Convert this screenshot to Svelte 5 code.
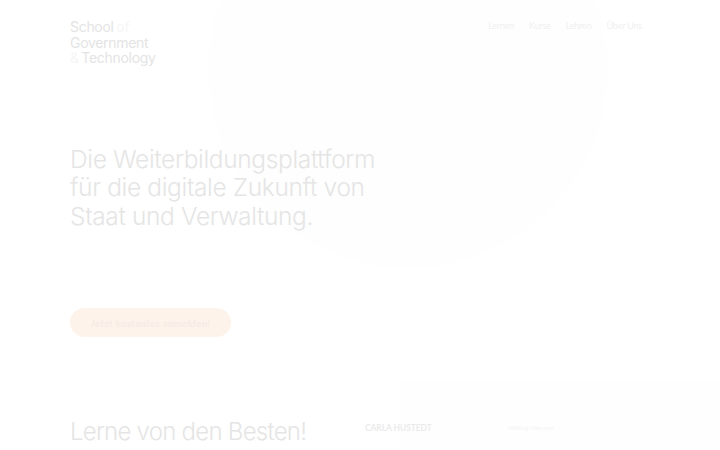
<script>
  const nav = ['Lernen', 'Kurse', 'Lehren', 'Über Uns'];
</script>

<div class="page">
  <div class="blob" aria-hidden="true"></div>
  <div class="panel" aria-hidden="true"></div>
  <header>
    <div class="logo">
      <div>School <span class="faint">of</span></div>
      <div>Government</div>
      <div><span class="faint">&amp;</span> Technology</div>
    </div>
    <nav>
      {#each nav as item}
        <span>{item}</span>
      {/each}
    </nav>
  </header>
  <main>
    <h1>Die Weiterbildungsplattform<br />für die digitale Zukunft von<br />Staat und Verwaltung.</h1>
    <button>Jetzt kostenlos anmelden!</button>
    <section>
      <h2>Lerne von den Besten!</h2>
      <div class="name">CARLA HUSTEDT</div>
      <div class="role">Stiftung Mercator</div>
    </section>
  </main>
</div>

<style>
  :global(body) {
    margin: 0;
    background: #fff;
  }
  .page {
    position: relative;
    width: 720px;
    height: 450px;
    overflow: hidden;
    background: #fff;
    font-family: "Lato", "Open Sans", sans-serif;
  }
  .blob {
    position: absolute;
    left: 208px;
    top: -132px;
    width: 400px;
    height: 400px;
    border-radius: 50%;
    background: #fefefe;
  }
  .panel {
    position: absolute;
    left: 400px;
    top: 380px;
    width: 320px;
    height: 70px;
    background: #fefefe;
  }
  header {
    position: relative;
    display: flex;
    justify-content: space-between;
    align-items: flex-start;
    padding: 19px 78px 0 70px;
  }
  .logo {
    font-family: "Inter", sans-serif;
    font-size: 14px;
    line-height: 15.5px;
    letter-spacing: -0.3px;
    word-spacing: -1px;
    color: #e4e4e4;
  }
  .faint {
    color: #f6f6f6;
  }
  nav {
    display: flex;
    gap: 15px;
    padding-top: 1px;
    font-size: 9px;
    line-height: 12px;
    letter-spacing: -0.2px;
    color: #f0f0f0;
  }
  main {
    position: relative;
    padding: 0 0 0 70px;
  }
  h1 {
    margin: 79px 0 0;
    font-family: "Inter", sans-serif;
    font-weight: 300;
    font-size: 24.5px;
    line-height: 28.5px;
    letter-spacing: -0.35px;
    color: #e5e5e5;
    white-space: nowrap;
  }
  button {
    display: block;
    margin-top: 78px;
    width: 161px;
    height: 29px;
    padding: 0;
    border: 0;
    border-radius: 15px;
    background: #fef3ea;
    font-family: "Lato", sans-serif;
    font-weight: 700;
    font-size: 10px;
    letter-spacing: 0.2px;
    color: #f5ebe6;
  }
  section {
    display: flex;
    align-items: flex-start;
    margin-top: 80px;
  }
  h2 {
    margin: 0;
    width: 295px;
    font-family: "Inter", sans-serif;
    font-weight: 300;
    font-size: 24px;
    line-height: 30px;
    letter-spacing: -0.75px;
    color: #e5e5e5;
    white-space: nowrap;
  }
  .name {
    width: 143px;
    margin-top: 5px;
    font-size: 8.5px;
    line-height: 12px;
    font-weight: 700;
    letter-spacing: -0.1px;
    color: #ebebeb;
  }
  .role {
    margin-top: 6px;
    font-size: 6px;
    line-height: 10px;
    color: #f4f4f4;
  }
</style>
